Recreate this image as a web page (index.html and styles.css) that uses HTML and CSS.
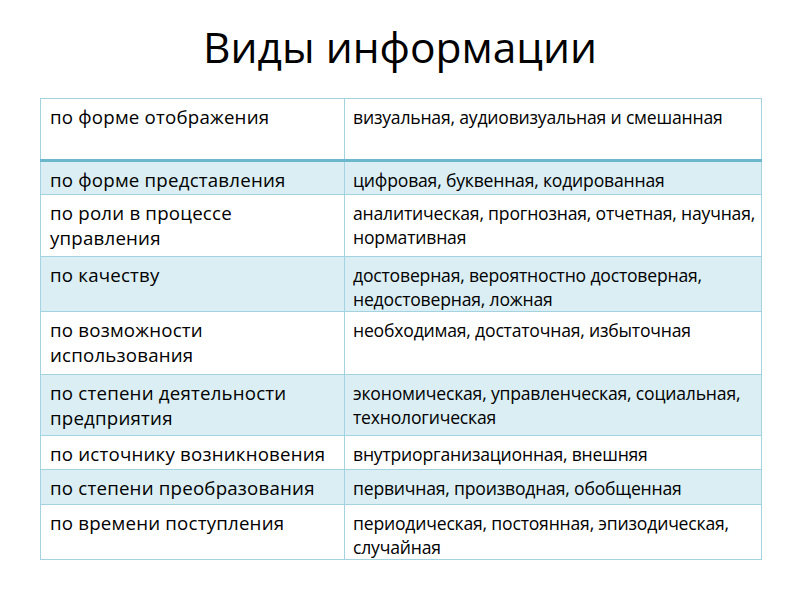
FILE: index.html
```html
<!DOCTYPE html>
<html lang="ru">
<head>
<meta charset="utf-8">
<title>Виды информации</title>
<link rel="stylesheet" href="styles.css">
</head>
<body>
<div class="slide">
  <h1 class="title">Виды информации</h1>
  <table class="info">
    <tr class="r62 head"><td class="k">по форме отображения</td><td class="v">визуальная, аудиовизуальная и смешанная</td></tr>
    <tr class="r34 alt"><td class="k">по форме представления</td><td class="v">цифровая, буквенная, кодированная</td></tr>
    <tr class="r62"><td class="k">по роли в процессе управления</td><td class="v">аналитическая, прогнозная, отчетная, научная, нормативная</td></tr>
    <tr class="r55 alt"><td class="k">по качеству</td><td class="v">достоверная, вероятностно достоверная, недостоверная, ложная</td></tr>
    <tr class="r63"><td class="k">по возможности использования</td><td class="v">необходимая, достаточная, избыточная</td></tr>
    <tr class="r61 alt"><td class="k">по степени деятельности предприятия</td><td class="v">экономическая, управленческая, социальная, технологическая</td></tr>
    <tr class="r34"><td class="k">по источнику возникновения</td><td class="v">внутриорганизационная, внешняя</td></tr>
    <tr class="r35 alt"><td class="k">по степени преобразования</td><td class="v">первичная, производная, обобщенная</td></tr>
    <tr class="r54"><td class="k">по времени поступления</td><td class="v">периодическая, постоянная, эпизодическая, случайная</td></tr>
  </table>
</div>
</body>
</html>
```
FILE: styles.css
```css
html, body {
  margin: 0;
  padding: 0;
  background: #ffffff;
}
.slide {
  width: 800px;
  height: 600px;
  font-family: "Open Sans", "Noto Sans", sans-serif;
  color: #000;
  padding-top: 19px;
  box-sizing: border-box;
}
.title {
  margin: 0;
  font-weight: 400;
  font-size: 42.5px;
  line-height: 56px;
  text-align: center;
  height: 79px;
}
.info {
  margin-left: 40px;
  width: 722px;
  border-collapse: collapse;
  table-layout: fixed;
}
.info td {
  border: 1px solid #a3d2e0;
  vertical-align: top;
  padding: 5px 4px 0 8px;
  line-height: 25px;
  box-sizing: border-box;
}
.info td.k {
  width: 304px;
  padding-left: 9px;
  font-size: 18.7px;
  letter-spacing: 0.2px;
}
.info td.v {
  font-size: 17.6px;
  line-height: 24px;
  padding-top: 6px;
  letter-spacing: -0.2px;
}
.info tr.head td {
  border-bottom: 3px solid #6bb8cd;
}
.info tr.alt td {
  background: #daeef3;
}
.r62 { height: 62px; }
.r34 { height: 34px; }
.r35 { height: 35px; }
.r55 { height: 55px; }
.r63 { height: 63px; }
.r61 { height: 61px; }
.r54 { height: 54px; }
```
